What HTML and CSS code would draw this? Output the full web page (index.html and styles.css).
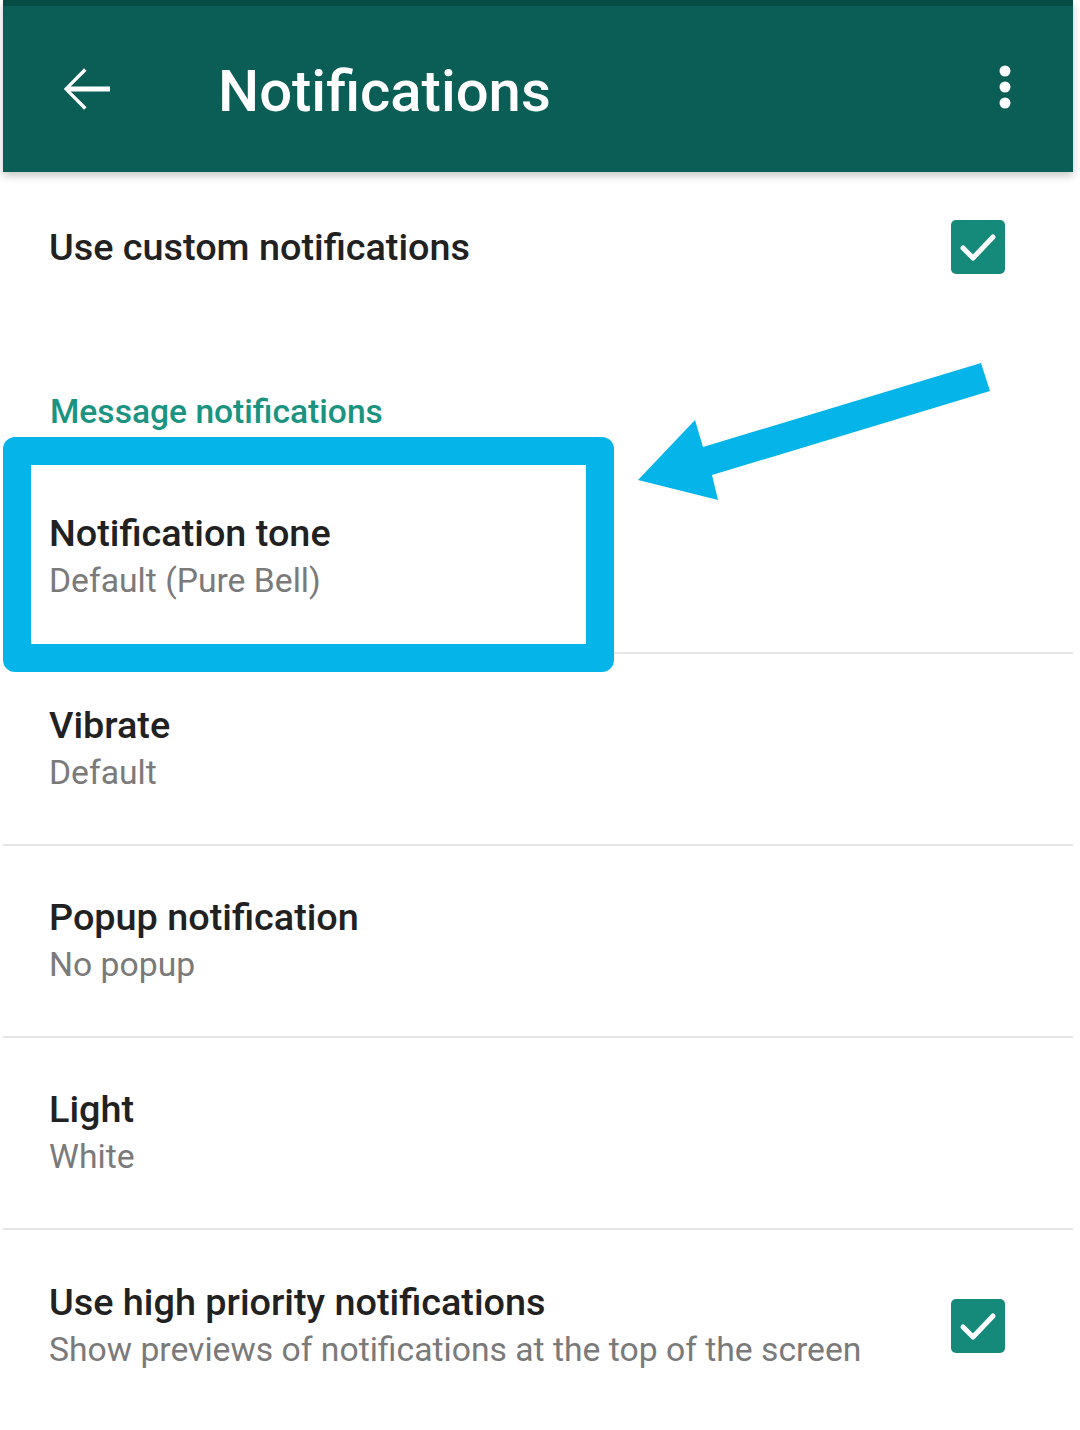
FILE: index.html
```html
<!DOCTYPE html>
<html lang="en">
<head>
    <meta charset="UTF-8">
    <meta name="viewport" content="width=device-width, initial-scale=1.0">
    <title>Notifications</title>
    <link rel="stylesheet" href="styles.css">
</head>
<body>
    <div class="screen">
        <div class="app-bar">
            <svg class="back" viewBox="0 0 24 24" width="72" height="72">
                <path d="M20 11.2H6.9l5.3-5.3-.85-.85L4.6 12l6.75 6.95.85-.85-5.3-5.3H20z" fill="#fff"/>
            </svg>
            <div class="bar-title">Notifications</div>
            <svg class="more" viewBox="0 0 12 48" width="12" height="48">
                <circle cx="6" cy="6" r="5.5" fill="#fff"/>
                <circle cx="6" cy="22" r="5.5" fill="#fff"/>
                <circle cx="6" cy="38" r="5.5" fill="#fff"/>
            </svg>
        </div>

        <div class="row row-top">
            <div class="row-text">
                <div class="row-title">Use custom notifications</div>
            </div>
            <div class="check">
                <svg viewBox="0 0 54 54" width="54" height="54">
                    <path d="M12 28l10 10 20-21" fill="none" stroke="#fff" stroke-width="5" stroke-linecap="round" stroke-linejoin="round"/>
                </svg>
            </div>
        </div>

        <div class="section">Message notifications</div>

        <div class="row">
            <div class="row-text">
                <div class="row-title">Notification tone</div>
                <div class="row-sub">Default (Pure Bell)</div>
            </div>
        </div>
        <div class="row">
            <div class="row-text">
                <div class="row-title">Vibrate</div>
                <div class="row-sub">Default</div>
            </div>
        </div>
        <div class="row">
            <div class="row-text">
                <div class="row-title">Popup notification</div>
                <div class="row-sub">No popup</div>
            </div>
        </div>
        <div class="row">
            <div class="row-text">
                <div class="row-title">Light</div>
                <div class="row-sub">White</div>
            </div>
        </div>
        <div class="row row-last">
            <div class="row-text">
                <div class="row-title">Use high priority notifications</div>
                <div class="row-sub">Show previews of notifications at the top of the screen</div>
            </div>
            <div class="check">
                <svg viewBox="0 0 54 54" width="54" height="54">
                    <path d="M12 28l10 10 20-21" fill="none" stroke="#fff" stroke-width="5" stroke-linecap="round" stroke-linejoin="round"/>
                </svg>
            </div>
        </div>
    </div>

    <!-- annotation drawn over the screenshot -->
    <div class="highlight"></div>
    <svg class="pointer" viewBox="0 0 1080 1430" width="1080" height="1430">
        <polygon points="981,363 990,391 712,475 718,500 638,480 695,420 703,447" fill="#05b5ea"/>
    </svg>
</body>
</html>
```

FILE: styles.css
```css
body {
    margin: 0;
    padding: 0;
    background: #fff;
    font-family: Roboto, "Noto Sans", sans-serif;
    position: relative;
    width: 1080px;
    height: 1430px;
    overflow: hidden;
}
.screen {
    margin: 0 7px 0 3px;
}
.app-bar {
    box-sizing: border-box;
    height: 172px;
    background: #0a5e55;
    border-top: 6px solid #074c44;
    display: flex;
    align-items: center;
    padding: 0 62px 0 47px;
    box-shadow: 0 4px 8px rgba(0, 0, 0, 0.22);
    position: relative;
}
.back {
    display: block;
}
.bar-title {
    flex: 1;
    color: #fff;
    font-size: 58px;
    font-weight: 500;
    margin-left: 96px;
    padding-top: 4px;
}
.more {
    display: block;
}
.row {
    box-sizing: border-box;
    height: 192px;
    border-bottom: 2px solid #e6e6e6;
    display: flex;
    align-items: center;
    justify-content: space-between;
    padding: 0 68px 0 46px;
}
.row-top {
    height: 150px;
    border-bottom: none;
}
.row-last {
    border-bottom: none;
}
.row-title {
    font-size: 37.8px;
    font-weight: 500;
    color: #212121;
    line-height: 47px;
}
.row-sub {
    font-size: 33.7px;
    color: #7a7a7a;
    line-height: 47px;
}
.check {
    width: 54px;
    height: 54px;
    border-radius: 5px;
    background: #15897a;
}
.check svg {
    display: block;
}
.section {
    box-sizing: border-box;
    height: 140px;
    padding: 70px 0 0 47px;
    font-size: 33.6px;
    font-weight: 500;
    color: #1a9481;
}
.highlight {
    position: absolute;
    left: 3px;
    top: 437px;
    width: 611px;
    height: 235px;
    box-sizing: border-box;
    border: 28px solid #05b5ea;
    border-radius: 12px;
}
.pointer {
    position: absolute;
    left: 0;
    top: 0;
    pointer-events: none;
}
```
